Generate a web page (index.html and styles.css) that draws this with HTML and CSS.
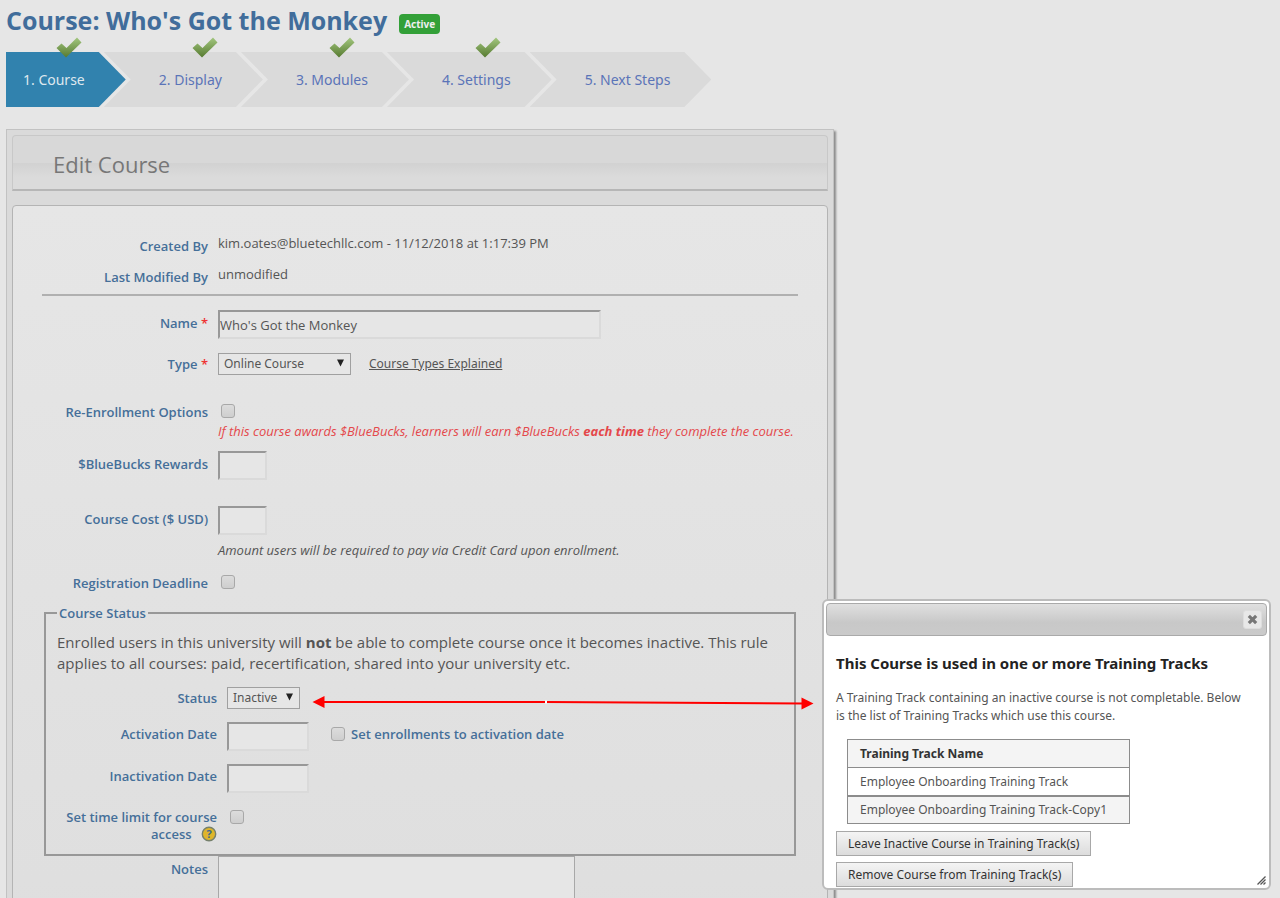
FILE: index.html
```html
<!DOCTYPE html>
<html lang="en">
<head>
<meta charset="utf-8">
<title>Edit Course</title>
<link rel="stylesheet" href="styles.css">
</head>
<body>
<svg class="defs" aria-hidden="true">
  <defs>
    <linearGradient id="green" x1="0" y1="0" x2="0" y2="1">
      <stop offset="0" stop-color="#a3c77f"/>
      <stop offset="1" stop-color="#567a30"/>
    </linearGradient>
    <symbol id="tick" viewBox="0 0 26 21">
      <path d="M0.5 11 L5.5 6.5 L10.5 11 L21 0.5 L25.5 5.5 L10 20.5 Z" fill="url(#green)"/>
    </symbol>
    <symbol id="caret" viewBox="0 0 7 8"><path d="M0 0.5 H7 L3.5 7.5 Z" fill="#222"/></symbol>
  </defs>
</svg>

<header class="title-bar">
  <h1>Course: Who's Got the Monkey</h1>
  <span class="badge">Active</span>
</header>

<nav aria-label="Course steps">
  <ol class="steps">
    <li class="step current"><a href="#course">1. Course<svg class="tick"><use href="#tick"/></svg></a></li>
    <li class="step"><a href="#display">2. Display<svg class="tick"><use href="#tick"/></svg></a></li>
    <li class="step"><a href="#modules">3. Modules<svg class="tick"><use href="#tick"/></svg></a></li>
    <li class="step"><a href="#settings">4. Settings<svg class="tick"><use href="#tick"/></svg></a></li>
    <li class="step"><a href="#next">5. Next Steps</a></li>
  </ol>
</nav>

<main class="panel">
  <h2 class="panel-head">Edit Course</h2>
  <form class="panel-body">
    <div class="row meta">
      <span class="label">Created By</span>
      <span>kim.oates@bluetechllc.com - 11/12/2018 at 1:17:39 PM</span>
    </div>
    <div class="row meta">
      <span class="label">Last Modified By</span>
      <span>unmodified</span>
    </div>
    <hr>
    <div class="row name-row">
      <label class="label" for="name">Name <span class="req">*</span></label>
      <div><input class="text wide" id="name" type="text" value="Who's Got the Monkey"></div>
    </div>
    <div class="row type-row">
      <label class="label" for="type">Type <span class="req">*</span></label>
      <div class="inline">
        <span class="select type-select"><select id="type"><option>Online Course</option></select><svg><use href="#caret"/></svg></span>
        <a class="help-link" href="#types">Course Types Explained</a>
      </div>
    </div>
    <div class="row check-row enroll-row">
      <label class="label" for="reenroll">Re-Enrollment Options</label>
      <div>
        <input class="check" id="reenroll" type="checkbox">
        <p class="hint warn">If this course awards $BlueBucks, learners will earn $BlueBucks <b>each time</b> they complete the course.</p>
      </div>
    </div>
    <div class="row reward-row">
      <label class="label" for="rewards">$BlueBucks Rewards</label>
      <div><input class="text tiny" id="rewards" type="text"></div>
    </div>
    <div class="row cost-row">
      <label class="label" for="cost">Course Cost ($ USD)</label>
      <div>
        <input class="text tiny" id="cost" type="text">
        <p class="hint cost-hint">Amount users will be required to pay via Credit Card upon enrollment.</p>
      </div>
    </div>
    <div class="row check-row deadline-row">
      <label class="label" for="deadline">Registration Deadline</label>
      <div><input class="check" id="deadline" type="checkbox"></div>
    </div>

    <fieldset>
      <legend>Course Status</legend>
      <p class="rule">Enrolled users in this university will <b>not</b> be able to complete course once it becomes inactive. This rule applies to all courses: paid, recertification, shared into your university etc.</p>
      <div class="row status-row">
        <label class="label" for="status">Status</label>
        <div><span class="select status-select"><select id="status"><option>Inactive</option></select><svg><use href="#caret"/></svg></span></div>
      </div>
      <div class="row date-row">
        <label class="label" for="activation">Activation Date</label>
        <div class="inline">
          <input class="text date" id="activation" type="text">
          <label class="label set-enroll"><input class="check" type="checkbox">Set enrollments to activation date</label>
        </div>
      </div>
      <div class="row date-row">
        <label class="label" for="inactivation">Inactivation Date</label>
        <div><input class="text date" id="inactivation" type="text"></div>
      </div>
      <div class="row check-row limit-row">
        <label class="label" for="limit">Set time limit for course access
          <svg class="help" viewBox="0 0 16 16" role="img" aria-label="Help"><circle cx="8" cy="8" r="6.7" fill="#dfb52a" stroke="#75806c" stroke-width="1.4"/><text x="8" y="12" text-anchor="middle">?</text></svg>
        </label>
        <div><input class="check" id="limit" type="checkbox"></div>
      </div>
    </fieldset>

    <div class="row notes-row">
      <label class="label" for="notes">Notes</label>
      <div><textarea id="notes"></textarea></div>
    </div>
  </form>
</main>

<svg class="arrow" viewBox="0 0 502 16" aria-hidden="true">
  <path d="M12 7 H233 M235 7 L492 8.5" stroke="#f00" stroke-width="2" fill="none"/>
  <path d="M233 5.5 h2 v3 h-2z" fill="#fff"/>
  <path d="M0.5 7 L12.5 1 V13 Z M501.5 8.5 L489.5 2.5 V14.5 Z" fill="#f00"/>
</svg>

<section class="dialog" role="dialog" aria-labelledby="dialog-title">
  <div class="dialog-bar">
    <button class="close" type="button" aria-label="Close"><svg viewBox="0 0 12 12"><path d="M2 2 L10 10 M10 2 L2 10" stroke="#777" stroke-width="3.4"/></svg></button>
  </div>
  <div class="dialog-body">
    <h3 id="dialog-title">This Course is used in one or more Training Tracks</h3>
    <p>A Training Track containing an inactive course is not completable. Below is the list of Training Tracks which use this course.</p>
    <table>
      <thead><tr><th scope="col">Training Track Name</th></tr></thead>
      <tbody>
        <tr><td>Employee Onboarding Training Track</td></tr>
        <tr class="alt"><td>Employee Onboarding Training Track-Copy1</td></tr>
      </tbody>
    </table>
    <div class="actions">
      <button class="action" type="button">Leave Inactive Course in Training Track(s)</button>
      <button class="action" type="button">Remove Course from Training Track(s)</button>
    </div>
  </div>
  <svg class="grip" viewBox="0 0 9 9" aria-hidden="true"><path d="M0.5 8.5 L8.5 0.5 M3.5 8.5 L8.5 3.5 M6.5 8.5 L8.5 6.5" stroke="#555" stroke-width="1.3"/></svg>
</section>
</body>
</html>
```

FILE: styles.css
```css
* { box-sizing: border-box; }

body {
  margin: 0;
  padding: 0 6px;
  height: 100vh;
  overflow: hidden;
  background: #e6e6e6;
  color: #555;
  font: 12px/18px "Noto Sans", "Open Sans", sans-serif;
}

h1, h2, h3, p { margin: 0; }
input, select, textarea, button { font: inherit; color: inherit; }
.defs { position: absolute; width: 0; height: 0; }

.title-bar { display: flex; align-items: center; gap: 12px; height: 40px; }
h1 { color: #416d9b; font-family: "Open Sans", sans-serif; font-size: 25px; line-height: 38px; font-weight: 700; }
.badge {
  margin-top: 8px;
  padding: 0 5px;
  border-radius: 4px;
  background: #33a038;
  color: #eee;
  font-size: 10px;
  line-height: 20px;
  font-weight: 700;
}

.steps { display: flex; margin: 12px 0 0; padding: 0; list-style: none; }
.step { position: relative; height: 55px; padding: 0 41px 0 55px; margin-left: -22px; }
.step::before {
  content: "";
  position: absolute;
  inset: 0;
  background: #dadada;
  clip-path: polygon(0 0, calc(100% - 27px) 0, 100% 50%, calc(100% - 27px) 100%, 0 100%, 27px 50%);
}
.step a { position: relative; display: block; color: #5a74b8; font-size: 14px; line-height: 55px; text-decoration: none; }
.step.current { margin-left: 0; padding-left: 17px; }
.step.current::before {
  background: #3182ae;
  clip-path: polygon(0 0, calc(100% - 27px) 0, 100% 50%, calc(100% - 27px) 100%, 0 100%);
}
.step.current a { color: #dfe8ee; }
.tick { position: absolute; left: 33px; top: -15px; width: 26px; height: 21px; }

.panel {
  max-width: 828px;
  margin-top: 22px;
  padding: 5px;
  border: 1px solid #c2c2c2;
  background: #dadada;
  box-shadow: 2px 2px 2px #8c8c8c;
}
.panel-head {
  padding: 3px 40px 0;
  border: 1px solid #c8c8c8;
  border-bottom: 2px solid #b6b6b6;
  border-radius: 4px 4px 0 0;
  background: linear-gradient(#d8d8d8 50%, #d2d2d2 52%, #dbdbdb 78%);
  color: #777;
  font-family: "Open Sans", sans-serif;
  font-size: 22px;
  line-height: 50px;
  font-weight: 400;
}
.panel-body {
  margin-top: 14px;
  padding: 28px 29px;
  border: 1px solid #b4b4b4;
  border-radius: 4px;
  background: linear-gradient(#e6e6e6, #dedede);
}

.row { display: grid; grid-template-columns: 166px minmax(0, 1fr); gap: 10px; align-items: start; }
.label { padding-top: 4px; color: #456f99; font-family: "Open Sans", sans-serif; font-weight: 600; font-size: 13px; text-align: right; }
.req { color: #e33; }
.row > div { display: flow-root; }
.row > .inline { display: flex; align-items: center; }
.meta { min-height: 31px; font-family: "Open Sans", sans-serif; font-size: 13px; }
.meta .label { padding-top: 3px; }
hr { margin: -2px 0 0; border: 0; border-top: 2px solid #b0b0b0; }

.text {
  display: block;
  height: 29px;
  padding: 0;
  border: 2px solid #dadada;
  border-top-color: #989898;
  border-left-color: #989898;
  background: #e6e6e6;
  font-family: "Open Sans", sans-serif;
  font-size: 13px;
}
.wide { width: 383px; }
.tiny { width: 49px; }
.date { width: 82px; }

.select { position: relative; display: block; }
.select select {
  display: block;
  width: 100%;
  height: 22px;
  padding: 0 5px;
  border: 1px solid #a0a0a0;
  border-radius: 0;
  background: #e6e6e6;
  appearance: none;
}
.select svg { position: absolute; right: 7px; top: 6px; width: 7px; height: 8px; pointer-events: none; }
.type-select { width: 133px; }
.status-select { width: 73px; }

.check {
  display: block;
  width: 14px;
  height: 14px;
  margin: 1px 3px 4px;
  border: 1px solid #a8a8a8;
  border-radius: 3px;
  background: linear-gradient(#dcdcdc, #cecece);
  appearance: none;
}
.check-row > .label { padding-top: 0; }
.hint { font-family: "Open Sans", sans-serif; font-size: 13px; font-style: italic; white-space: nowrap; }
.warn { color: #e4484b; }
.cost-hint { margin-top: 6px; }
.help-link { margin-left: 18px; color: #555; }

.name-row { margin-top: 14px; }
.type-row { margin-top: 14px; }
.type-row > .label, .status-row > .label { padding-top: 2px; }
.enroll-row { margin-top: 28px; }
.reward-row { margin-top: 11px; }
.cost-row { margin-top: 26px; }
.deadline-row { margin-top: 15px; }

fieldset {
  min-width: 0;
  margin: 11px 2px 0;
  padding: 10px 11px 11px;
  border: 2px solid #989898;
}
legend { padding: 0 2px; color: #456f99; font-family: "Open Sans", sans-serif; font-size: 13px; font-weight: 600; }
.rule { font-family: "Open Sans", sans-serif; font-size: 15px; line-height: 21px; }
fieldset .row { grid-template-columns: 160px minmax(0, 1fr); }
.status-row, .date-row { margin-top: 13px; }
.date-row > .label { padding-top: 3px; }
.set-enroll { display: flex; align-items: center; gap: 3px; margin-left: 19px; padding: 0 0 5px; }
.set-enroll .check { margin: 0 3px; }
.limit-row { margin-top: 16px; }
.limit-row .label { line-height: 17px; }
.help { width: 16px; height: 16px; margin-left: 6px; vertical-align: -3px; }
.help text { fill: #42698c; font-size: 11px; font-weight: 700; }

textarea {
  display: block;
  width: 357px;
  height: 90px;
  border: 1px solid #a8a8a8;
  background: #e6e6e6;
  resize: none;
}

.arrow { position: absolute; left: 312px; top: 695px; width: 502px; height: 16px; }

.dialog {
  position: absolute;
  right: 9px;
  bottom: 8px;
  width: 449px;
  padding: 2px 2px 1px;
  border: 2px solid #bcbcbc;
  border-radius: 6px;
  background: #fff;
}
.dialog-bar {
  display: flex;
  justify-content: flex-end;
  align-items: center;
  height: 33px;
  padding: 0 4px;
  border: 1px solid #aaa;
  border-radius: 4px;
  background: linear-gradient(#e0e0e0, #c8c8c8 60%, #cacaca);
}
.close { width: 19px; height: 19px; padding: 3px; border: 1px solid #ddd; border-radius: 3px; background: #e8e8e8; }
.close svg { display: block; width: 11px; height: 11px; }
.dialog-body { padding: 17px 10px 0; }
h3 { color: #222; font-size: 15px; line-height: 20px; font-weight: 700; }
.dialog-body p { margin-top: 16px; padding-right: 8px; }
table { margin: 14px 0 0 11px; border-collapse: collapse; }
th, td { height: 28px; padding: 1px 22px 0 12px; border: 1px solid #8c8c8c; text-align: left; }
th { background: #f4f4f4; color: #333; font-weight: 700; }
.alt td { border-top-width: 2px; background: #f4f4f4; }
.actions { display: flex; flex-direction: column; align-items: flex-start; gap: 6px; margin-top: 7px; }
.action {
  height: 25px;
  padding: 0 11px;
  border: 1px solid #a8a8a8;
  background: linear-gradient(#f4f4f4, #dcdcdc);
  color: #333;
}
.grip { position: absolute; right: 3px; bottom: 3px; width: 9px; height: 9px; }
```
